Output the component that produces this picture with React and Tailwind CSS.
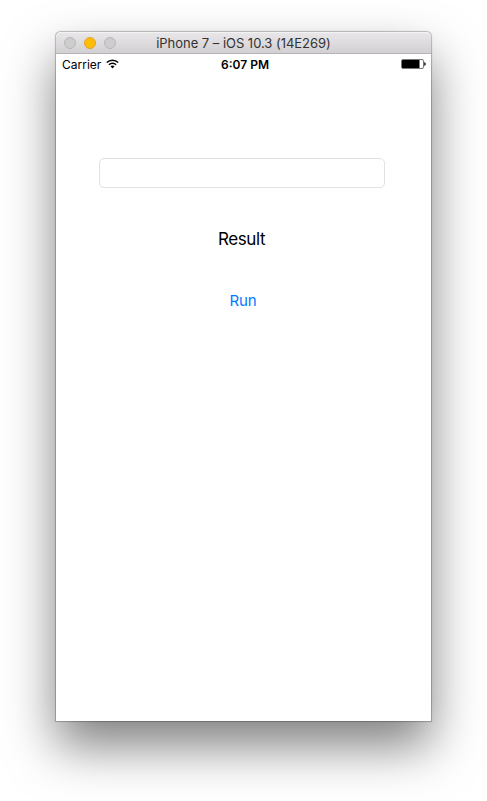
const Light = ({ active }) => (
  <span
    className={
      active
        ? "h-3 w-3 rounded-full border border-[#e2a32b] bg-[#ffbd06]"
        : "h-3 w-3 rounded-full border border-[#b9b8b9] bg-[#cecdce]"
    }
  />
);

function TitleBar() {
  return (
    <header className="grid h-[22px] grid-cols-[100px_175px_100px] items-center rounded-t-[5px] border-b border-[#b5b3b5] border-t border-t-[#f4f3f4] bg-linear-to-b from-[#e8e6e8] to-[#d2d0d2]">
      <div className="flex gap-2 pl-2">
        <Light />
        <Light active />
        <Light />
      </div>
      <h1 className="text-center text-[13px] leading-5 tracking-[-0.03px] whitespace-nowrap text-[#333233]">
        iPhone 7 – iOS 10.3 (14E269)
      </h1>
    </header>
  );
}

function WifiIcon() {
  return (
    <svg width="13" height="10" viewBox="0 0 13 10" fill="none" stroke="black" strokeWidth="1.5">
      <path d="M0.8 3.6 C3.9 0.4 9.1 0.4 12.2 3.6" />
      <path d="M2.9 5.7 C4.9 3.7 8.1 3.7 10.1 5.7" />
      <path d="M6.5 9.4 L4.5 7.3 C5.6 6.3 7.4 6.3 8.5 7.3 Z" fill="black" stroke="none" />
    </svg>
  );
}

function BatteryIcon() {
  return (
    <svg width="25" height="10" viewBox="0 0 25 10">
      <rect x="0.5" y="0.5" width="22" height="9" rx="1.5" fill="white" stroke="#777" />
      <rect x="1" y="1" width="17.5" height="8" rx="0.5" fill="black" />
      <path d="M23.5 3.3 C24.9 3.7 24.9 6.3 23.5 6.7 Z" fill="black" stroke="black" strokeWidth="0.4" />
    </svg>
  );
}

function StatusBar() {
  return (
    <div className="grid h-5 grid-cols-[1fr_auto_1fr] items-center pr-[5px] pl-1.5 text-xs leading-5 text-black">
      <div className="flex items-center gap-[5px]">
        <span className="pt-0.5 leading-[18px]">Carrier</span>
        <WifiIcon />
      </div>
      <span className="pt-0.5 pl-0.5 leading-[18px] font-semibold">6:07 PM</span>
      <div className="flex justify-end">
        <BatteryIcon />
      </div>
    </div>
  );
}

export default function App() {
  return (
    <main className="h-[801px] w-[487px] overflow-hidden bg-white pt-8 pl-14 font-['Inter','Liberation_Sans',sans-serif]">
      <section className="h-[689px] w-[375px] rounded-t-[5px] bg-white shadow-[0_0_1px_0.5px_rgba(0,0,0,0.25),0_25px_50px_rgba(0,0,0,0.5)]">
        <TitleBar />
        <StatusBar />
        <div className="flex flex-col items-center pr-[3px] pt-[84px]">
          <input
            aria-label="Input"
            className="h-[30px] w-[286px] rounded-[5px] border border-[#e2e2e2] bg-white px-2 outline-none"
          />
          <p className="mt-10 pr-px text-[17px] leading-[22px] tracking-[-0.4px] text-black">Result</p>
          <button className="mt-[42px] pl-0.5 text-[15px] leading-[18px] tracking-[-0.2px] text-[#007aff]">Run</button>
        </div>
      </section>
    </main>
  );
}
